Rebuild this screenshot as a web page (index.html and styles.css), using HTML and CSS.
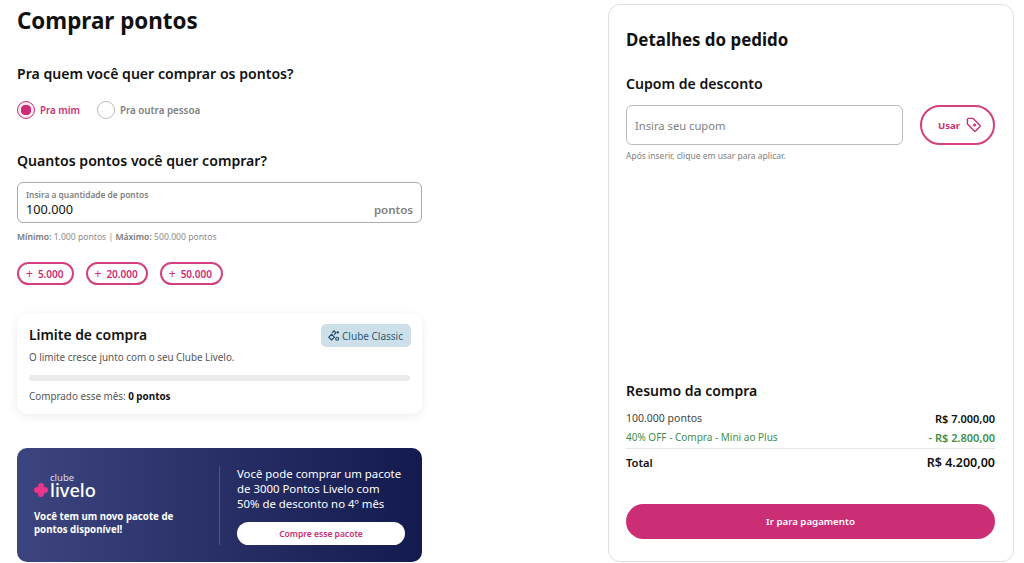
FILE: index.html
```html
<!DOCTYPE html>
<html lang="pt-BR">

<head>
    <meta charset="utf-8">
    <meta name="viewport" content="width=device-width, initial-scale=1.0">
    <title>Comprar pontos</title>
    <link rel="stylesheet" href="styles.css">
</head>

<body>
    <div class="pagina">
        <main class="compra">
            <h1 class="titulo">Comprar pontos</h1>

            <h2 class="pergunta">Pra quem você quer comprar os pontos?</h2>
            <div class="opcoes">
                <div class="opcao ativa"><span class="radio"></span>Pra mim</div>
                <div class="opcao"><span class="radio"></span>Pra outra pessoa</div>
            </div>

            <h2 class="pergunta quantos">Quantos pontos você quer comprar?</h2>
            <div class="campo-pontos">
                <div>
                    <p class="campo-label">Insira a quantidade de pontos</p>
                    <p class="campo-valor">100.000</p>
                </div>
                <span class="campo-sufixo">pontos</span>
            </div>
            <p class="ajuda"><b>Mínimo:</b> 1.000 pontos | <b>Máximo:</b> 500.000 pontos</p>
            <div class="atalhos">
                <button class="atalho"><span class="mais">+</span>5.000</button>
                <button class="atalho"><span class="mais">+</span>20.000</button>
                <button class="atalho"><span class="mais">+</span>50.000</button>
            </div>

            <section class="limite">
                <div class="limite-topo">
                    <h3 class="limite-titulo">Limite de compra</h3>
                    <span class="selo">
                        <svg width="12" height="12" viewBox="0 0 12 12" fill="none" stroke="#1f4a63" stroke-width="1.100">
                            <path d="M.8 7.200 3.600 4.400l2.800 2.800-2.800 2.800z" />
                            <path d="M4 2.800 6 .8l2 2-2 2" />
                            <path d="M9.800 1.200v2.400M8.600 2.400H11" />
                            <circle cx="9.200" cy="8.800" r="1.500" />
                        </svg>
                        Clube Classic
                    </span>
                </div>
                <p class="limite-texto limite-sub">O limite cresce junto com o seu Clube Livelo.</p>
                <div class="barra"></div>
                <p class="limite-texto">Comprado esse mês: <b>0 pontos</b></p>
            </section>

            <section class="banner">
                <div class="banner-esq">
                    <div class="logo">
                        <svg width="14" height="14" viewBox="0 0 14 14">
                            <path d="M7 3v8M3 7h8" stroke="#e8348a" stroke-width="6" stroke-linecap="round" />
                        </svg>
                        <div class="logo-texto">
                            <span class="logo-clube">clube</span>
                            <span class="logo-livelo">livelo</span>
                        </div>
                    </div>
                    <p class="banner-novo">Você tem um novo pacote de pontos disponível!</p>
                </div>
                <div class="banner-dir">
                    <p class="banner-oferta">Você pode comprar um pacote de 3000 Pontos Livelo com 50% de desconto no 4º mês</p>
                    <button class="banner-botao">Compre esse pacote</button>
                </div>
            </section>
        </main>

        <aside class="pedido">
            <h2 class="pedido-titulo">Detalhes do pedido</h2>
            <h3 class="pedido-sub">Cupom de desconto</h3>
            <div class="cupom">
                <div class="cupom-campo">Insira seu cupom</div>
                <button class="cupom-botao">
                    Usar
                    <svg width="16" height="16" viewBox="0 0 17 17" fill="none" stroke="#cc2e76" stroke-width="1.500" stroke-linejoin="round">
                        <path d="M1.500 2.500a1 1 0 0 1 1-1h5l7.300 7.300a1 1 0 0 1 0 1.400l-4.600 4.600a1 1 0 0 1-1.400 0L1.500 7.500z" />
                        <path d="M7.500 8.500h3.200M9.100 6.900v3.200" stroke-width="1.700" />
                    </svg>
                </button>
            </div>
            <p class="cupom-ajuda">Após inserir, clique em usar para aplicar.</p>

            <section class="resumo">
                <h3 class="resumo-titulo">Resumo da compra</h3>
                <div class="linha"><span>100.000 pontos</span><b>R$ 7.000,00</b></div>
                <div class="linha desconto"><span>40% OFF - Compra - Mini ao Plus</span><b>- R$ 2.800,00</b></div>
                <div class="linha total"><span>Total</span><b>R$ 4.200,00</b></div>
                <button class="pagar">Ir para pagamento</button>
            </section>
        </aside>
    </div>
</body>

</html>
```

FILE: styles.css
```css
* {
    box-sizing: border-box;
}

html,
body {
    height: 100%;
}

body {
    margin: 0;
    background: white;
    color: #111;
    font-family: "Noto Sans", "Open Sans", sans-serif;
    overflow: hidden;
}

h1,
h2,
h3,
p {
    margin: 0;
}

button {
    font-family: inherit;
    background: white;
    cursor: pointer;
}

.pagina {
    display: flex;
    justify-content: space-between;
    padding: 4px 10px 0 17px;
    height: 563px;
}

.compra {
    width: 405px;
}

.titulo {
    font-size: 22.400px;
    line-height: 33px;
    font-weight: 700;
}

.pergunta {
    font-size: 14.100px;
    line-height: 20px;
    font-weight: 600;
    margin-top: 27px;
}

.quantos {
    margin-top: 32px;
}

.opcoes {
    display: flex;
    gap: 17px;
    margin-top: 17px;
}

.opcao {
    display: flex;
    align-items: center;
    gap: 5px;
    font-size: 9.800px;
    font-weight: 600;
    color: #808080;
}

.opcao .radio {
    width: 18px;
    height: 18px;
    border: 1px solid #bbb;
    border-radius: 50%;
}

.opcao.ativa {
    color: #cc2e76;
}

.opcao.ativa .radio {
    border-color: #cc2e76;
    background: radial-gradient(circle, #cc2e76 0 5px, #fbe9f1 5.500px);
}

.campo-pontos {
    display: flex;
    justify-content: space-between;
    align-items: flex-end;
    height: 41px;
    margin-top: 11px;
    padding: 6px 8px 4px;
    border: 1px solid #aaa;
    border-radius: 6px;
}

.campo-label {
    font-size: 8.400px;
    line-height: 12px;
    font-weight: 600;
    color: #808080;
}

.campo-valor {
    font-size: 12.700px;
    line-height: 17px;
}

.campo-sufixo {
    font-size: 11.500px;
    line-height: 17px;
    font-weight: 600;
    color: #808080;
}

.ajuda {
    font-size: 8.650px;
    line-height: 12px;
    color: #8c8c8c;
    margin-top: 8px;
}

.ajuda b {
    font-weight: 600;
    color: #777;
}

.atalhos {
    display: flex;
    gap: 11.500px;
    margin-top: 19px;
}

.atalho {
    display: flex;
    align-items: center;
    gap: 5px;
    height: 23px;
    padding: 0 8.500px 0 7px;
    border: 2px solid #d4407f;
    border-radius: 12px;
    color: #cc2e76;
    font-size: 10px;
    font-weight: 600;
}

.mais {
    font-size: 12px;
    font-weight: 400;
}

.limite {
    height: 101px;
    margin-top: 28px;
    padding: 11px 11px 11px 12px;
    border-radius: 10px;
    box-shadow: 0 2px 10px rgba(0, 0, 0, 0.08);
}

.limite-topo {
    display: flex;
    justify-content: space-between;
}

.limite-titulo {
    font-size: 13.900px;
    line-height: 20px;
    font-weight: 600;
    margin-top: 1px;
}

.selo {
    display: flex;
    align-items: center;
    gap: 2px;
    height: 23px;
    padding: 1px 8px 0 7px;
    border-radius: 5px;
    background: #cde0ea;
    color: #2b5a73;
    font-size: 10px;
}

.limite-texto {
    font-size: 9.850px;
    line-height: 14px;
    color: #555;
}

.limite-sub {
    margin-top: 3px;
}

.limite-texto b {
    color: #111;
}

.barra {
    height: 6px;
    margin: 11px 1px 8px 0;
    border-radius: 3px;
    background: #ebebeb;
}

.banner {
    display: flex;
    height: 114px;
    margin-top: 34px;
    border-radius: 10px;
    background: linear-gradient(90deg, #3d4580, #131a4e);
    color: white;
}

.banner-esq {
    width: 202px;
    padding: 25px 0 0 17px;
}

.logo {
    display: flex;
    align-items: flex-end;
    gap: 2px;
}

.logo svg {
    margin-bottom: 2px;
}

.logo-texto {
    display: flex;
    flex-direction: column;
}

.logo-clube {
    font-size: 9.500px;
    line-height: 9px;
    color: #dcdcea;
}

.logo-livelo {
    font-size: 18.200px;
    line-height: 17px;
    font-weight: 500;
}

.banner-novo {
    width: 150px;
    margin-top: 11px;
    font-size: 9.700px;
    line-height: 13px;
    font-weight: 700;
}

.banner-dir {
    flex: 1;
    margin: 18px 0 17px;
    padding: 0 17px;
    border-left: 1px solid #4d5488;
}

.banner-oferta {
    font-size: 11.400px;
    line-height: 15px;
}

.banner-botao {
    display: block;
    width: 100%;
    height: 23px;
    margin-top: 11px;
    border: 0;
    border-radius: 12px;
    color: #cc2e76;
    font-size: 8.500px;
    font-weight: 600;
}

.pedido {
    display: flex;
    flex-direction: column;
    width: 406px;
    height: 558px;
    padding: 23px 18px 22px 17px;
    border: 1px solid #e0e0e0;
    border-radius: 12px;
}

.pedido-titulo {
    font-size: 16.900px;
    line-height: 24px;
    font-weight: 700;
}

.pedido-sub {
    margin-top: 22px;
    font-size: 14.100px;
    line-height: 20px;
    font-weight: 600;
}

.cupom {
    display: flex;
    justify-content: space-between;
    margin-top: 11px;
}

.cupom-campo {
    display: flex;
    align-items: center;
    width: 277px;
    height: 40px;
    padding-left: 8px;
    border: 1px solid #bbb;
    border-radius: 6px;
    font-size: 11.200px;
    color: #808080;
}

.cupom-botao {
    display: flex;
    align-items: center;
    justify-content: center;
    gap: 6px;
    width: 75px;
    height: 40px;
    padding: 0 0 0 5px;
    border: 2px solid #d4407f;
    border-radius: 20px;
    color: #cc2e76;
    font-size: 9.600px;
    font-weight: 700;
}

.cupom-ajuda {
    margin-top: 5px;
    font-size: 8.500px;
    line-height: 12px;
    color: #808080;
}

.resumo {
    margin-top: auto;
}

.resumo-titulo {
    font-size: 14px;
    line-height: 20px;
    font-weight: 600;
    margin-bottom: 8px;
}

.linha {
    display: flex;
    justify-content: space-between;
    font-size: 10.500px;
    line-height: 19px;
    color: #444;
}

.linha b {
    font-size: 11px;
    font-weight: 600;
    color: #111;
}

.desconto {
    font-size: 10px;
}

.desconto,
.desconto b {
    color: #3f8f4a;
}

.total {
    margin-top: 1px;
    padding-top: 4px;
    border-top: 1px solid #e6e6e6;
    font-size: 11.200px;
    font-weight: 600;
    color: #111;
}

.total b {
    font-size: 12.500px;
}

.pagar {
    width: 100%;
    height: 35px;
    margin-top: 32px;
    border: 0;
    border-radius: 18px;
    background: #cc2e76;
    color: white;
    font-size: 9.700px;
    font-weight: 600;
}
```
